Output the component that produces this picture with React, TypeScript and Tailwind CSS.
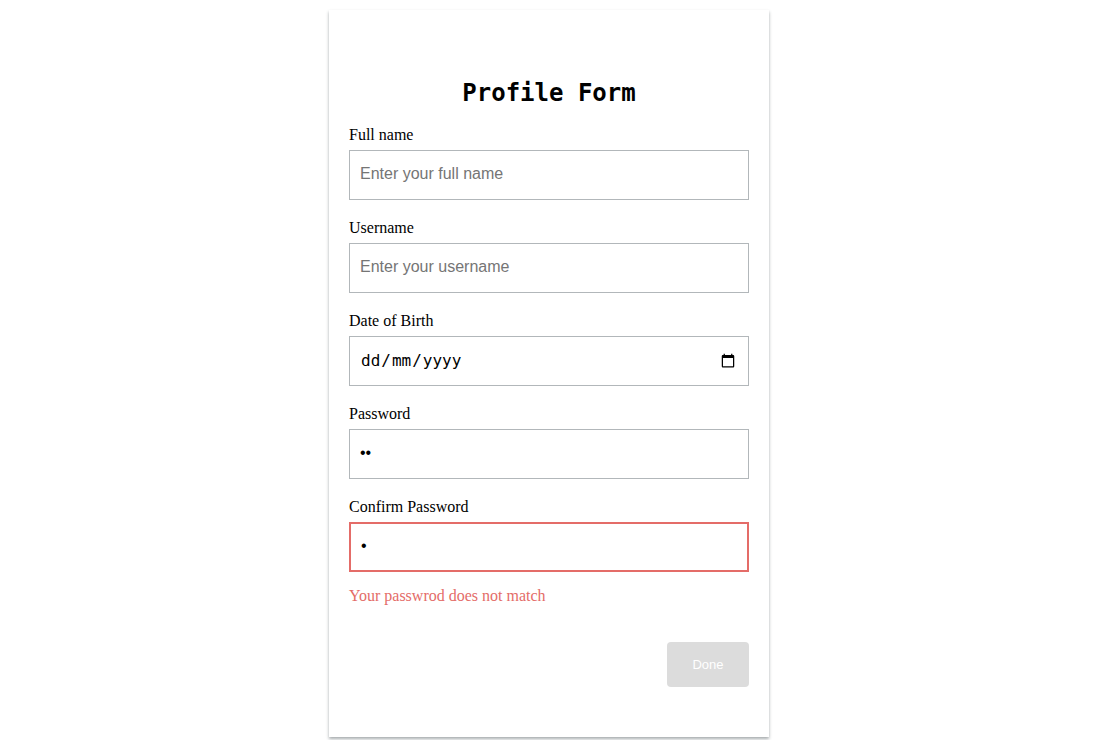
import { useState } from "react";

const inputStyle =
  "block w-full h-[50px] px-[10px] text-[16px] leading-[20px] bg-white rounded-none outline-none placeholder:text-[#757575]";

// day first, whatever the browser's locale is
const dayFirst =
  "[&::-webkit-datetime-edit-fields-wrapper]:inline-grid [&::-webkit-datetime-edit-day-field]:row-start-1 [&::-webkit-datetime-edit-day-field]:col-start-1 [&::-webkit-datetime-edit-month-field]:row-start-1 [&::-webkit-datetime-edit-month-field]:col-start-3 [&::-webkit-datetime-edit-year-field]:row-start-1 [&::-webkit-datetime-edit-year-field]:col-start-5 [&::-webkit-datetime-edit-text]:row-start-1";

export default function App() {
  const [fullName, setFullName] = useState("");
  const [username, setUsername] = useState("");
  const [birthDate, setBirthDate] = useState("");
  const [password, setPassword] = useState("ab");
  const [confirmPassword, setConfirmPassword] = useState("a");

  const mismatch = password !== confirmPassword;
  const disabled = mismatch || !fullName || !username || !birthDate;

  return (
    <div className="w-full pl-[10px] pr-[11px] pt-[10px] pb-[3px] bg-white text-black text-[16px] leading-[20px] font-['Liberation_Serif',serif]">
      <form
        onSubmit={(e) => e.preventDefault()}
        className="w-full max-w-[440px] mx-auto px-[20px] pt-[69px] pb-[50px] shadow-[0_2px_3px_rgba(60,70,75,0.45)]"
      >
        <h1 className="mb-[18px] text-center text-[24px] leading-[28px] font-bold font-['DejaVu_Sans_Mono',monospace]">
          Profile Form
        </h1>

        <div className="mb-[18px]">
          <label htmlFor="fullName" className="block mb-[5px]">
            Full name
          </label>
          <input
            id="fullName"
            type="text"
            placeholder="Enter your full name"
            value={fullName}
            onChange={(e) => setFullName(e.target.value)}
            className={`${inputStyle} pb-[2px] border border-[#b2b7ba] font-['Liberation_Sans',sans-serif]`}
          />
        </div>

        <div className="mb-[18px]">
          <label htmlFor="username" className="block mb-[5px]">
            Username
          </label>
          <input
            id="username"
            type="text"
            placeholder="Enter your username"
            value={username}
            onChange={(e) => setUsername(e.target.value)}
            className={`${inputStyle} pb-[2px] border border-[#b2b7ba] font-['Liberation_Sans',sans-serif]`}
          />
        </div>

        <div className="mb-[18px]">
          <label htmlFor="birthDate" className="block mb-[5px]">
            Date of Birth
          </label>
          <input
            id="birthDate"
            type="date"
            value={birthDate}
            onChange={(e) => setBirthDate(e.target.value)}
            className={`${inputStyle} ${dayFirst} border border-[#b2b7ba] font-['DejaVu_Sans_Mono',monospace]`}
          />
        </div>

        <div className="mb-[18px]">
          <label htmlFor="password" className="block mb-[5px]">
            Password
          </label>
          <input
            id="password"
            type="password"
            value={password}
            onChange={(e) => setPassword(e.target.value)}
            className={`${inputStyle} pb-[2px] border border-[#b2b7ba] font-['Liberation_Sans',sans-serif]`}
          />
        </div>

        <div>
          <label htmlFor="confirmPassword" className="block mb-[5px]">
            Confirm Password
          </label>
          <input
            id="confirmPassword"
            type="password"
            value={confirmPassword}
            onChange={(e) => setConfirmPassword(e.target.value)}
            className={`${inputStyle} pb-[2px] ${mismatch ? "border-2 border-[#e46c68]" : "border border-[#b2b7ba]"} font-['Liberation_Sans',sans-serif]`}
          />
          {mismatch && (
            <p className="mt-[14px] text-[#e46c68]">Your passwrod does not match</p>
          )}
        </div>

        <div className="mt-[36px] flex justify-end">
          <button
            type="submit"
            disabled={disabled}
            className="w-[82px] h-[45px] rounded-[4px] text-[13px] text-white bg-[#4caf50] disabled:bg-[#dcdcdc] font-['Liberation_Sans',sans-serif]"
          >
            Done
          </button>
        </div>
      </form>
    </div>
  );
}
